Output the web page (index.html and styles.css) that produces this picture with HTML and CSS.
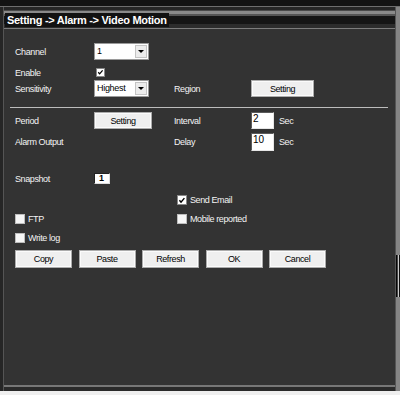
FILE: index.html
```html
<!DOCTYPE html>
<html>
<head>
<meta charset="utf-8">
<link rel="stylesheet" href="styles.css">
</head>
<body>
<div class="screen">
  <div class="topbar"></div>
  <div class="main">
    <div class="edge-left"></div>
    <div class="frame">
      <div class="gap-top"></div>
      <div class="titlebar"><span class="title">Setting -&gt; Alarm -&gt; Video Motion</span></div>
      <div class="content">
        <div class="row r1">
          <span class="lbl">Channel</span>
          <div class="select"><span class="val">1</span><span class="arrow"><i class="tri"></i></span></div>
        </div>
        <div class="row r2">
          <span class="lbl">Enable</span>
          <span class="cb checked"><svg viewBox="0 0 9 9" width="9" height="9"><path d="M1.6 4.2 L3.4 6.3 L7.2 1.8" fill="none" stroke="#000" stroke-width="1.6"/></svg></span>
        </div>
        <div class="row r3">
          <span class="lbl">Sensitivity</span>
          <div class="select"><span class="val">Highest</span><span class="arrow"><i class="tri"></i></span></div>
          <span class="lbl">Region</span>
          <span class="btn btn-wide">Setting</span>
        </div>
        <div class="sep"></div>
        <div class="row r4">
          <span class="lbl">Period</span>
          <span class="btn btn-mid">Setting</span>
          <span class="lbl">Interval</span>
          <span class="numwrap"><span class="num">2</span><span class="lbl">Sec</span></span>
        </div>
        <div class="row r5">
          <span class="lbl">Alarm Output</span>
          <span></span>
          <span class="lbl">Delay</span>
          <span class="numwrap"><span class="num">10</span><span class="lbl">Sec</span></span>
        </div>
        <div class="row r6">
          <span class="lbl">Snapshot</span>
          <span class="snap">1</span>
        </div>
        <div class="row r7">
          <span></span>
          <span></span>
          <span class="check"><span class="cb checked"><svg viewBox="0 0 9 9" width="9" height="9"><path d="M1.6 4.2 L3.4 6.3 L7.2 1.8" fill="none" stroke="#000" stroke-width="1.6"/></svg></span><span class="lbl">Send Email</span></span>
        </div>
        <div class="row r8">
          <span class="check"><span class="cb"></span><span class="lbl">FTP</span></span>
          <span></span>
          <span class="check"><span class="cb"></span><span class="lbl">Mobile reported</span></span>
        </div>
        <div class="row r9">
          <span class="check wide"><span class="cb"></span><span class="lbl">Write log</span></span>
        </div>
        <div class="buttons">
          <span class="btn btn-act">Copy</span>
          <span class="btn btn-act">Paste</span>
          <span class="btn btn-act">Refresh</span>
          <span class="btn btn-act">OK</span>
          <span class="btn btn-act">Cancel</span>
        </div>
      </div>
      <div class="frame-bottom"></div>
    </div>
    <div class="edge-right"><div class="thumb"></div></div>
  </div>
</div>
</body>
</html>
```

FILE: styles.css
```css
* { box-sizing: border-box; }
html, body { margin: 0; padding: 0; }
body {
  width: 400px;
  height: 395px;
  overflow: hidden;
  background: #efefef;
  font-family: "Liberation Sans", Arial, sans-serif;
}
.screen {
  display: flex;
  flex-direction: column;
  height: 391px;
}
.topbar {
  height: 7px;
  background: #131313;
  border-bottom: 1px solid #6e6e6e;
}
.main {
  flex: 1;
  display: flex;
}
.edge-left {
  width: 3px;
  background: #262626;
}
.frame {
  flex: 1;
  display: flex;
  flex-direction: column;
  border-left: 1px solid #555;
  box-shadow: inset 1px 0 0 #7a7a7a;
}
.gap-top {
  height: 3px;
  background: #262626;
}
.titlebar {
  height: 19px;
  padding-left: 1px;
  background: linear-gradient(to bottom,
    #4a4a4a 0, #4a4a4a 1px,
    #8a8a8a 1px, #8a8a8a 4px,
    #555 4px, #555 6px,
    #151515 6px, #151515 14px,
    #2c2c2c 14px, #2c2c2c 18px,
    #7c7c7c 18px, #7c7c7c 19px);
}
.title {
  display: inline-block;
  margin-top: 3px;
  height: 14px;
  line-height: 14px;
  padding: 0 2px 0 2px;
  background: #121212;
  color: #fff;
  font-weight: bold;
  font-size: 11px;
  letter-spacing: -0.3px;
}
.content {
  flex: 1;
  background: #333;
  padding: 14px 0 0 11px;
  display: flex;
  flex-direction: column;
}
.frame-bottom {
  height: 6px;
  background: #2a2a2a;
  border-top: 2px solid #777;
}
.edge-right {
  width: 5px;
  background: #858585;
  border-left: 1px solid #555;
}
.thumb {
  margin-top: 248px;
  height: 42px;
  background: linear-gradient(to right, #000 0, #111 30%, #e0e0e0 60%, #111 85%);
}
.row {
  display: grid;
  grid-template-columns: 80px 79px 77px auto;
  align-items: center;
}
.r1 { height: 17px; }
.r2 { height: 15px; margin-top: 5px; }
.r3 { height: 17px; }
.r4 { height: 17px; }
.r5 { height: 18px; margin-top: 4px; }
.r6 { height: 13px; margin-top: 21px; }
.r7 { height: 12px; margin-top: 9px; }
.r8 { height: 12px; margin-top: 7px; }
.r9 { height: 12px; margin-top: 7px; }
.lbl {
  color: #f4f4f4;
  font-size: 9px;
  letter-spacing: -0.4px;
  white-space: nowrap;
}
.sep {
  height: 1px;
  margin: 10px 7px 4px -5px;
  background: #bcbcbc;
}
.select {
  display: flex;
  width: 55px;
  height: 17px;
  margin-left: -1px;
  background: #fff;
  border: 1px solid #9a9a9a;
}
.select .val {
  flex: 1;
  padding-left: 2px;
  color: #000;
  font-size: 9px;
  letter-spacing: -0.3px;
  line-height: 14px;
}
.select .arrow {
  width: 12px;
  margin: 1px;
  background: #ececec;
  border: 1px solid #c4c4c4;
  display: flex;
  align-items: center;
  justify-content: center;
}
.tri {
  width: 0;
  height: 0;
  border-left: 3px solid transparent;
  border-right: 3px solid transparent;
  border-top: 3px solid #000;
}
.cb {
  width: 10px;
  height: 10px;
  background: #f6f6f6;
  border: 1px solid #bdbdbd;
  display: flex;
  align-items: center;
  justify-content: center;
}
.cb.checked { background: #fff; border-color: #888; }
.cb svg { display: block; }
.r2 .cb { width: 9px; height: 9px; margin-left: 1px; }
.check {
  display: flex;
  align-items: center;
  gap: 3px;
}
.r7 .check, .r8 .check:last-child { margin-left: 3px; }
.check.wide { grid-column: 1 / 3; }
.btn {
  display: flex;
  align-items: center;
  justify-content: center;
  height: 17px;
  background: #efefef;
  border: 1px solid #acacac;
  box-shadow: inset 0 0 0 1px #fbfbfb;
  color: #000;
  font-size: 9px;
  letter-spacing: -0.4px;
}
.btn-wide { width: 63px; height: 17px; }
.btn-mid { width: 58px; margin-left: -1px; }
.numwrap {
  display: flex;
  align-items: center;
  gap: 5px;
}
.num {
  width: 23px;
  height: 18px;
  background: #fff;
  border: 1px solid;
  border-color: #5a5a5a #e6e6e6 #e6e6e6 #5a5a5a;
  color: #000;
  font-size: 10px;
  line-height: 12px;
  padding-left: 1px;
}
.r4 .num { height: 17px; }
.snap {
  width: 16px;
  height: 11px;
  margin-left: -1px;
  background: #fff;
  border: 1px solid;
  border-color: #222 #ddd #ddd #222;
  color: #000;
  font-size: 9px;
  font-weight: bold;
  line-height: 9px;
  padding-left: 4px;
}
.buttons {
  display: flex;
  gap: 6.5px;
  margin-top: 6px;
}
.btn-act {
  width: 57px;
  height: 18px;
}
```
